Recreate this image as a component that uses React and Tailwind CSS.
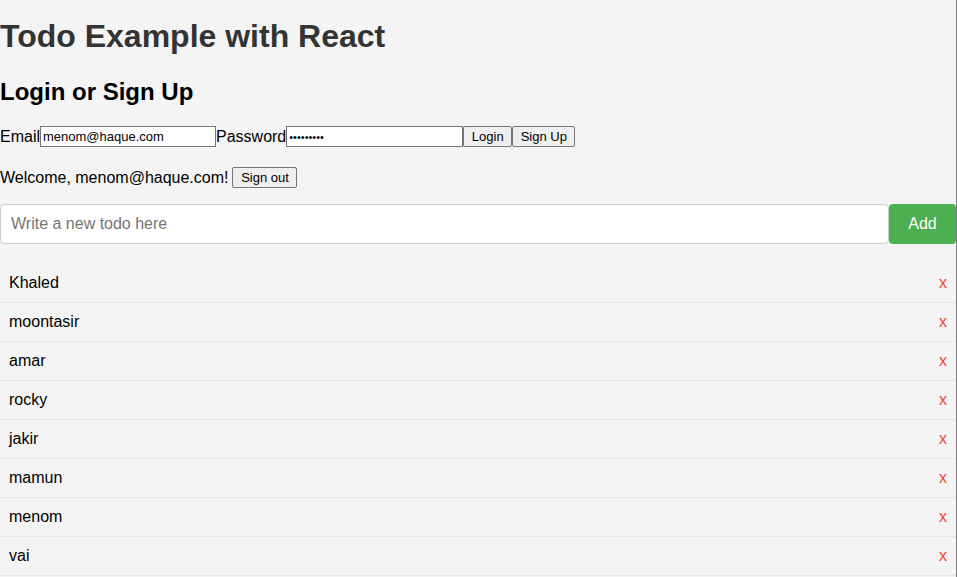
import { useState } from "react"

const initialTodos = ["Khaled", "moontasir", "amar", "rocky", "jakir", "mamun", "menom", "vai"]

export default function App() {
  const [todos, setTodos] = useState(initialTodos)
  const [text, setText] = useState("")

  const addTodo = (e) => {
    e.preventDefault()
    if (!text.trim()) return
    setTodos((t) => [...t, text.trim()])
    setText("")
  }

  return (
    <div className="min-h-screen bg-[#f4f4f4] border-r border-[#7a7a7a] text-black font-['Liberation_Sans',Arial,sans-serif] overflow-hidden">
      <h1 className="pt-[18px] text-[32px] leading-[37px] font-bold text-[#333]">Todo Example with React</h1>
      <h2 className="mt-[23px] text-[24px] leading-[28px] font-bold">Login or Sign Up</h2>

      {/* Auth form */}
      <form className="mt-[20px] flex items-center h-[21px] text-[16px]" onSubmit={(e) => e.preventDefault()}>
        <label htmlFor="email">Email</label>
        <input
          id="email"
          type="email"
          defaultValue="menom@haque.com"
          className="w-[176px] h-[21px] border border-[#767676] bg-white px-[2px] text-[13px] leading-[15px] outline-none"
        />
        <label htmlFor="password">Password</label>
        <input
          id="password"
          type="password"
          defaultValue="123456789"
          className="w-[177px] h-[21px] border border-[#767676] bg-white px-[2px] text-[11px] leading-[15px] outline-none"
        />
        <button className="w-[49px] h-[21px] border border-[#767676] bg-[#efefef] rounded-[2px] text-[13px] leading-[15px]">
          Login
        </button>
        <button className="w-[63px] h-[21px] border border-[#767676] bg-[#efefef] rounded-[2px] text-[13px] leading-[15px]">
          Sign Up
        </button>
      </form>

      <p className="mt-[20px] flex items-center h-[21px] text-[16px]">
        Welcome, menom@haque.com!
        <button className="ml-[4px] w-[65px] h-[21px] border border-[#767676] bg-[#efefef] rounded-[2px] text-[13px] leading-[15px]">
          Sign out
        </button>
      </p>

      {/* New todo */}
      <form className="mt-[16px] flex h-[40px]" onSubmit={addTodo}>
        <input
          value={text}
          onChange={(e) => setText(e.target.value)}
          placeholder="Write a new todo here"
          className="flex-1 h-full border border-[#ccc] rounded-[4px] bg-white px-[10px] text-[16px] placeholder:text-[#757575] outline-none"
        />
        <button type="submit" className="w-[67px] h-full bg-[#4caf50] text-white text-[16px] rounded-[4px]">
          Add
        </button>
      </form>

      <ul className="mt-[20px]">
        {todos.map((todo, i) => (
          <li key={i} className="flex items-center justify-between pl-[9px] pr-[9px] py-[10px] leading-[18px] text-[16px] border-b border-[#e6e6e6]">
            <span>{todo}</span>
            <button className="text-[#f44336] text-[16px] leading-[18px]" onClick={() => setTodos((t) => t.filter((_, j) => j !== i))}>
              x
            </button>
          </li>
        ))}
      </ul>
    </div>
  )
}
